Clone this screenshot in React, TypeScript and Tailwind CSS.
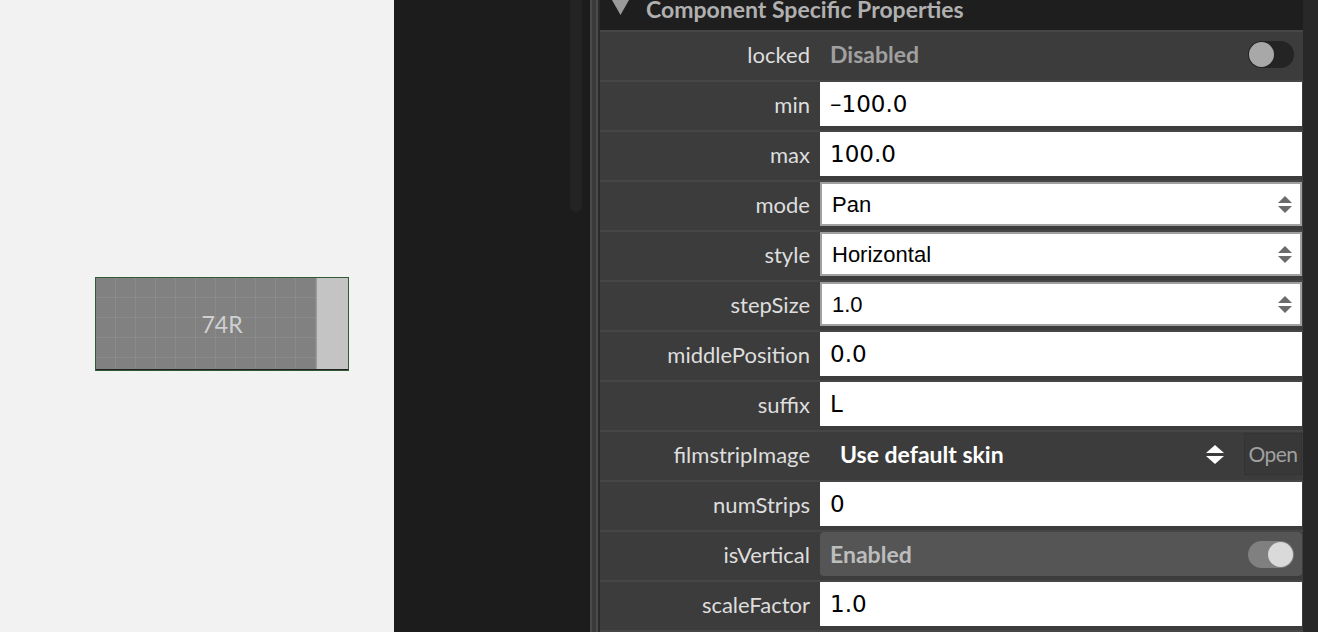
const lato = "font-['Lato','Liberation_Sans',sans-serif]";

function Arrows({ color = "#6b6b6b", w = 14, h = 7 }: { color?: string; w?: number; h?: number }) {
  return (
    <svg width={w} height={h * 2 + 3} viewBox={`0 0 ${w} ${h * 2 + 3}`}>
      <polygon points={`0,${h} ${w / 2},0 ${w},${h}`} fill={color} />
      <polygon points={`0,${h + 3} ${w},${h + 3} ${w / 2},${h * 2 + 3}`} fill={color} />
    </svg>
  );
}

function Label({ text }: { text: string }) {
  return (
    <div className={`flex h-[44px] w-[220px] shrink-0 items-center justify-end pr-[10px] text-[22px] text-[#dedede] ${lato}`}>
      {text}
    </div>
  );
}

function Row({ label, children }: { label: string; children: React.ReactNode }) {
  return (
    <div className="flex h-[50px] items-start border-t-2 border-[#464646] bg-[#3c3c3c]">
      <Label text={label} />
      <div className="flex h-[44px] flex-1 items-stretch pr-[1px]">{children}</div>
    </div>
  );
}

function TextBox({ value }: { value: string }) {
  return (
    <div className="flex flex-1 items-center bg-white pl-[10px] font-['DejaVu_Sans',sans-serif] text-[23px] text-black">
      {value}
    </div>
  );
}

function SelectBox({ value }: { value: string }) {
  return (
    <div className="flex flex-1 items-center justify-between border-2 border-[#a0a0a0] bg-white pl-[10px] pr-[8px] font-['Liberation_Sans',sans-serif] text-[22px] text-black">
      <span>{value}</span>
      <Arrows />
    </div>
  );
}

function Toggle({ on }: { on: boolean }) {
  return (
    <div
      className={`flex h-[27px] w-[46px] items-center rounded-full px-[1px] ${
        on ? "justify-end bg-[#808080]" : "justify-start bg-[#242424]"
      }`}
    >
      <div className={`h-[25px] w-[25px] rounded-full ${on ? "bg-[#dadada]" : "bg-[#a8a8a8]"}`} />
    </div>
  );
}

export default function App() {
  return (
    <div className="flex h-[632px] w-[1318px] overflow-hidden">
      {/* canvas */}
      <div className="relative w-[394px] shrink-0 bg-[#f2f2f2]">
        <div className="absolute left-[95px] top-[277px] h-[94px] w-[254px] border border-[#2f5a35]">
          <div className="flex h-full border-b border-[#222]">
            <div className="flex-1 bg-[#818181] bg-[linear-gradient(to_right,rgba(255,255,255,0.07)_1px,transparent_1px),linear-gradient(to_bottom,rgba(255,255,255,0.07)_1px,transparent_1px)] bg-size-[20px_20px] bg-position-[19px_19px]" />
            <div className="w-[32px] border-l border-[#999] bg-[#c4c4c4]" />
          </div>
          <span
            className={`absolute inset-0 flex items-center justify-center text-[23px] text-[#d0d0d0] ${lato}`}
          >
            74R
          </span>
        </div>
      </div>

      {/* dark gutter with scroll thumb */}
      <div className="flex w-[196px] shrink-0 justify-end bg-[#1c1c1c] pr-[8px]">
        <div className="h-[212px] w-[12px] rounded-b-full bg-[#232323]" />
      </div>
      <div className="flex w-[10px] shrink-0">
        <div className="w-[2px] bg-[#4b4b4b]" />
        <div className="w-[4px] bg-[#3a3a3a]" />
        <div className="w-[2px] bg-[#4b4b4b]" />
        <div className="w-[2px] bg-[#2a2a2a]" />
      </div>

      {/* properties panel */}
      <div className="flex w-[703px] shrink-0 flex-col">
        <div className={`flex h-[30px] items-start bg-[#1e1e1e] pl-[12px] ${lato}`}>
          <svg width="17" height="16" viewBox="0 0 17 16">
            <polygon points="0,0 17,0 8.5,15" fill="#9a9a9a" />
          </svg>
          <span className="-mt-[5px] ml-[17px] text-[23px] font-bold leading-[28px] text-[#b0b0b0]">
            Component Specific Properties
          </span>
        </div>

        <Row label="locked">
          <div className="flex flex-1 items-center justify-between pl-[10px] pr-[8px]">
            <span className={`text-[23px] font-bold text-[#a0a0a0] ${lato}`}>Disabled</span>
            <Toggle on={false} />
          </div>
        </Row>
        <Row label="min">
          <TextBox value="–100.0" />
        </Row>
        <Row label="max">
          <TextBox value="100.0" />
        </Row>
        <Row label="mode">
          <SelectBox value="Pan" />
        </Row>
        <Row label="style">
          <SelectBox value="Horizontal" />
        </Row>
        <Row label="stepSize">
          <SelectBox value="1.0" />
        </Row>
        <Row label="middlePosition">
          <TextBox value="0.0" />
        </Row>
        <Row label="suffix">
          <TextBox value="L" />
        </Row>
        <Row label="filmstripImage">
          <div className="flex flex-1 items-center pl-[20px]">
            <span className={`flex-1 text-[23px] font-bold text-white ${lato}`}>Use default skin</span>
            <div className="mr-[20px]">
              <Arrows color="#ffffff" w={18} h={8} />
            </div>
            <div
              className={`flex h-[42px] w-[58px] items-center justify-center border border-[#333] bg-[#383838] text-[21px] tracking-[-0.5px] text-[#a0a0a0] ${lato}`}
            >
              Open
            </div>
          </div>
        </Row>
        <Row label="numStrips">
          <TextBox value="0" />
        </Row>
        <Row label="isVertical">
          <div className="flex flex-1 items-center justify-between rounded-[4px] bg-[#555555] pl-[10px] pr-[8px]">
            <span className={`text-[23px] font-bold text-[#bdbdbd] ${lato}`}>Enabled</span>
            <Toggle on={true} />
          </div>
        </Row>
        <Row label="scaleFactor">
          <TextBox value="1.0" />
        </Row>
        <div className="flex-1 border-t-2 border-[#464646] bg-[#3c3c3c]" />
      </div>

      <div className="flex-1 bg-[#282828]" />
    </div>
  );
}
